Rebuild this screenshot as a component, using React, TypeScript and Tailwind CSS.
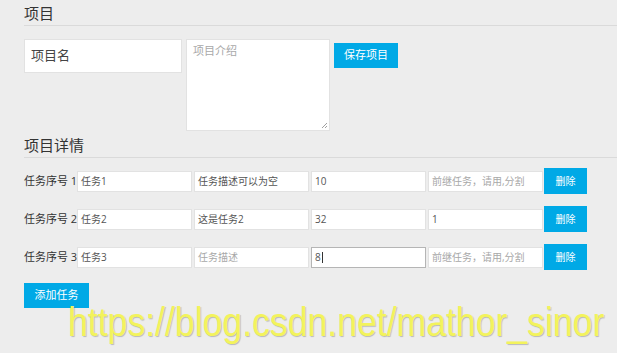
const ff = { fontFamily: '"Open Sans", "Noto Sans CJK SC", sans-serif' };

function SectionTitle({ children }: { children: string }) {
  return (
    <div className="border-b border-[#dadada] pb-[2px] text-[15px] leading-[20px] text-[#333]">
      {children}
    </div>
  );
}

function Cell({ value, placeholder, focused }: { value?: string; placeholder?: string; focused?: boolean }) {
  return (
    <div
      className={`flex h-[21px] w-[115px] shrink-0 items-center whitespace-nowrap border bg-white px-[3px] text-[10px] ${
        focused ? "border-[#b5b5b5]" : "border-[#e2e2e2]"
      }`}
    >
      {value ? (
        <span className="text-[#555]">
          {value}
          {focused && <span className="ml-[1px] inline-block h-[11px] w-px translate-y-[2px] bg-[#333]" />}
        </span>
      ) : (
        <span className="text-[#a8a8a8]">{placeholder}</span>
      )}
    </div>
  );
}

function BlueButton({ children, className }: { children: string; className?: string }) {
  return (
    <div className={`flex shrink-0 items-center justify-center bg-[#00a9e6] text-white ${className ?? ""}`}>
      {children}
    </div>
  );
}

const rows = [
  { n: 1, name: "任务1", desc: "任务描述可以为空", time: "10", pre: "" },
  { n: 2, name: "任务2", desc: "这是任务2", time: "32", pre: "1" },
  { n: 3, name: "任务3", desc: "", time: "8", pre: "", focused: true },
];

export default function App() {
  return (
    <div className="relative h-[353px] w-[617px] overflow-hidden bg-[#ededed] pl-[24px] pt-[3px]" style={ff}>
      <SectionTitle>项目</SectionTitle>

      <div className="mt-[13px] flex items-start gap-[4px]">
        <div className="flex h-[34px] w-[158px] items-center border border-[#e2e2e2] bg-white px-[6px] text-[13px] text-[#444]">
          项目名
        </div>
        <div className="relative h-[92px] w-[144px] border border-[#e2e2e2] bg-white px-[6px] pt-[3px] text-[11px] text-[#a8a8a8]">
          项目介绍
          <svg className="absolute bottom-[1px] right-[1px]" width="7" height="7" viewBox="0 0 7 7">
            <path d="M6 1L1 6M6 4L4 6" stroke="#888" strokeWidth="0.8" />
          </svg>
        </div>
        <BlueButton className="mt-[4px] h-[25px] w-[64px] text-[11px]">保存项目</BlueButton>
      </div>

      <div className="mt-[4px]">
        <SectionTitle>项目详情</SectionTitle>
      </div>

      <div className="mt-[10px] flex flex-col gap-[12px]">
        {rows.map((r) => (
          <div key={r.n} className="flex h-[26px] items-center">
            <div className="w-[53px] shrink-0 whitespace-nowrap text-[11px] text-[#333]">任务序号 {r.n}</div>
            <div className="flex gap-[2px]">
              <Cell value={r.name} />
              <Cell value={r.desc} placeholder="任务描述" />
              <Cell value={r.time} focused={r.focused} />
              <Cell value={r.pre} placeholder="前继任务，请用,分割" />
            </div>
            <BlueButton className="ml-px h-[26px] w-[43px] text-[10px]">删除</BlueButton>
          </div>
        ))}
      </div>

      <BlueButton className="mt-[13px] h-[25px] w-[65px] text-[11px]">添加任务</BlueButton>

      <div
        className="pointer-events-none absolute left-[68px] top-[298px] origin-left scale-x-[0.89] whitespace-nowrap text-[40px] leading-[48px] text-[#f3f35c]"
        style={{ fontFamily: '"Liberation Sans", Arial, sans-serif', textShadow: "1px 1px 1px rgba(0,0,0,0.22)" }}
      >
        https://blog.csdn.net/mathor_sinor
      </div>
    </div>
  );
}
